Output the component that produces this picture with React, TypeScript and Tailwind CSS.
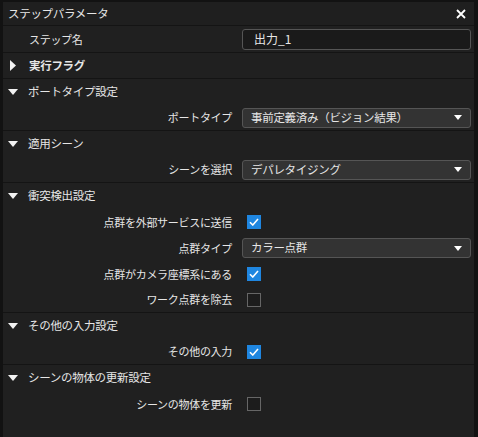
import React from 'react';

const font = { fontFamily: '"Noto Sans CJK JP", "Noto Sans", sans-serif' };

const Caret = ({ open }: { open: boolean }) =>
  open ? (
    <svg width="10" height="6" viewBox="0 0 10 6" className="shrink-0">
      <path d="M0 0 H10 L5 6 Z" fill="#f2f2f2" />
    </svg>
  ) : (
    <svg width="6" height="11" viewBox="0 0 6 11" className="shrink-0">
      <path d="M0 0 L6 5.5 L0 11 Z" fill="#f2f2f2" />
    </svg>
  );

const Header = ({ title, open = true, bold = false, last = false }: { title: string; open?: boolean; bold?: boolean; last?: boolean }) => (
  <div className={`h-[26px] flex items-center ${last ? 'border-b border-[#141414]' : ''} ${open ? 'pl-[5px]' : 'pl-[7px]'}`}>
    <Caret open={open} />
    <span className={`text-[11.5px] tracking-[-0.3px] text-[#e6e6e6] ${open ? 'ml-[10px]' : 'ml-[13px]'} ${bold ? 'font-bold' : ''}`}>{title}</span>
  </div>
);

const Row = ({ label, children, last = false, h = 'h-[26px]', left = false }: { label: string; children: React.ReactNode; last?: boolean; h?: string; left?: boolean }) => (
  <div className={`${h} flex items-center ${last ? 'border-b border-[#141414]' : ''}`}>
    <div className={`w-[229px] text-[11px] tracking-[-0.3px] text-[#e6e6e6] ${left ? 'text-left pl-[26px]' : 'text-right'}`}>{label}</div>
    <div className="flex-1 pl-[10px] pr-[3px] flex items-center">{children}</div>
  </div>
);

const Select = ({ value }: { value: string }) => (
  <div className="w-full h-[20px] bg-[#333333] border border-[#555555] rounded-[3px] flex items-center pl-[8px] pr-[8px]">
    <span className="flex-1 text-[11.5px] tracking-[-0.3px] text-[#e6e6e6]">{value}</span>
    <svg width="8" height="5" viewBox="0 0 8 5">
      <path d="M0 0 H8 L4 5 Z" fill="#ffffff" />
    </svg>
  </div>
);

const Check = ({ on }: { on: boolean }) =>
  on ? (
    <div className="ml-[5px] w-[14px] h-[14px] bg-[#1f86e0] flex items-center justify-center">
      <svg width="10" height="8" viewBox="0 0 10 8">
        <path d="M1 4.2 L3.8 7 L9 1" fill="none" stroke="#ffffff" strokeWidth="1.6" />
      </svg>
    </div>
  ) : (
    <div className="ml-[5px] w-[14px] h-[14px] bg-[#1c1c1c] border border-[#666666]" />
  );

export default function App() {
  return (
    <div style={font} className="w-[478px] h-[437px] bg-[#121212] pt-[2px] pl-[3px] pr-[4px] overflow-hidden">
      <div className="h-full bg-[#202020] flex flex-col">
        <div className="h-[24px] flex items-center justify-between pl-[5px] pr-[8px] border-b border-[#141414] bg-[#1f1f1f]">
          <span className="text-[11.5px] tracking-[-0.3px] text-[#e6e6e6]">ステップパラメータ</span>
          <svg width="10" height="10" viewBox="0 0 10 10">
            <path d="M1 1 L9 9 M9 1 L1 9" stroke="#ffffff" strokeWidth="1.8" />
          </svg>
        </div>

        <Row label="ステップ名" last h="h-[27px]" left>
          <div className="w-full h-[21px] bg-[#1a1a1a] border border-[#555555] rounded-[3px] flex items-center pl-[11px] text-[12px] text-[#e6e6e6]">
            出力_1
          </div>
        </Row>

        <Header title="実行フラグ" open={false} bold last />

        <Header title="ポートタイプ設定" />
        <Row label="ポートタイプ" last>
          <Select value="事前定義済み（ビジョン結果）" />
        </Row>

        <Header title="適用シーン" />
        <Row label="シーンを選択" last>
          <Select value="デパレタイジング" />
        </Row>

        <Header title="衝突検出設定" />
        <Row label="点群を外部サービスに送信">
          <Check on />
        </Row>
        <Row label="点群タイプ">
          <Select value="カラー点群" />
        </Row>
        <Row label="点群がカメラ座標系にある">
          <Check on />
        </Row>
        <Row label="ワーク点群を除去" last>
          <Check on={false} />
        </Row>

        <Header title="その他の入力設定" />
        <Row label="その他の入力" last>
          <Check on />
        </Row>

        <Header title="シーンの物体の更新設定" />
        <Row label="シーンの物体を更新">
          <Check on={false} />
        </Row>
      </div>
    </div>
  );
}
